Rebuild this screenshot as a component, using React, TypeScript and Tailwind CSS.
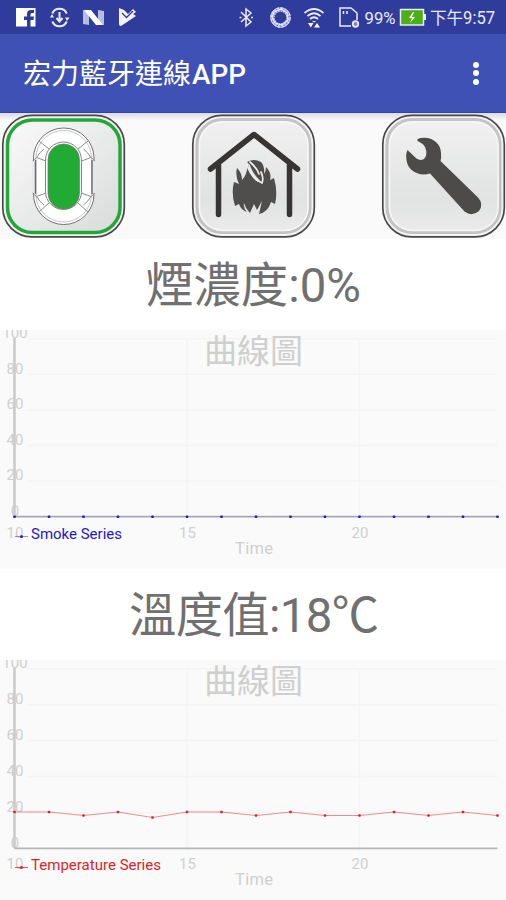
import React from "react";

const FONT = "font-[Roboto,'Noto_Sans_CJK_TC',sans-serif]";

function StatusBar() {
  return (
    <div className="h-[34px] bg-[#303c9c]">
      <svg width="506" height="34" className="block" fill="none" stroke="#e9ebf8">
        {/* social */}
        <path d="M16 8h19.500v18.500h-5v-6.500h3l.5-3.500h-3.500v-2q0-1.500 1.500-1.500h2v-3h-3q-4 0-4 4v2.500h-3v3.500h3v6.500H16z" fill="#fff" stroke="none" />
        {/* sync */}
        <path d="M52.300 13.500a7.800 7.800 0 0 1 14.400 0M52.300 21.500a7.800 7.800 0 0 0 14.400 0" strokeWidth="2" />
        <path d="M50 17.500h4l-2-3.500zM65 17.500h4.500l-2.500 3.500z" fill="#e9ebf8" stroke="none" />
        <path d="M59.500 12v9M56.500 18l3 3.500 3-3.500" strokeWidth="2" />
        {/* letter-shaped ribbon */}
        <path d="M83 10l6 1v14l-6-1zM98 10l6 1v14l-6-1z" fill="#b6bce2" stroke="none" />
        <path d="M84 10h7l12 15h-7z" fill="#fff" stroke="none" />
        {/* checked play */}
        <path d="M119 8l5 2 4 4 5-5 3 3-3 2 3 2-15 10q-2 0-2-2z" fill="#f2f3fc" stroke="none" />
        <path d="M122 13l4.500 4.500 6.500-6.500" stroke="#303c9c" strokeWidth="1.300" />
        {/* bluetooth */}
        <path d="M241 12l10 10-5 4V9l5 4-10 9" strokeWidth="1.500" />
        <path d="M239.500 17.500h2M251 17.500h2" strokeWidth="1.500" />
        {/* aperture ring */}
        <circle cx="280.500" cy="17.500" r="8" strokeWidth="4.500" strokeDasharray="2.600 .5" stroke="#b4bae6" />
        <path d="M274 12l7-3 6 4 1 7-6 5-7-2-3-6z" strokeWidth="1.200" />
        <circle cx="280.500" cy="17.500" r="9.700" strokeWidth="1" strokeDasharray="4 1" />
        {/* wifi */}
        <path d="M304.500 13q9.500-8 19 0M307.500 16q6.500-5.500 13 0M310 19q4-3.500 8 0" strokeWidth="1.700" />
        <path d="M312 21h4l-2 1.500z" fill="#fff" stroke="none" />
        <path d="M308 23h5.500l-2.700 4.500zM314 27.500h6l-3-4.500z" fill="#fff" stroke="none" />
        {/* memory card */}
        <path d="M351 26h-11V8h11l6 5v7M343.500 11v3M347 11v3" strokeWidth="1.500" />
        <circle cx="355.500" cy="24" r="2.800" strokeWidth="1.700" fill="#7e87c7" />
        <g fill="#e9ebf8" stroke="none" className={FONT}>
          <text x="364.500" y="24" fontSize="17" textLength="31" lengthAdjust="spacingAndGlyphs">99%</text>
          <text x="430" y="24" fontSize="17.500" textLength="65" lengthAdjust="spacingAndGlyphs">下午9:57</text>
        </g>
        {/* battery */}
        <rect x="400.500" y="9.500" width="23" height="15.500" fill="#4cb012" strokeWidth="1.500" />
        <path d="M425 14v6" strokeWidth="2" />
        <path d="M413 12l-4 6h3l-2 5 5-6h-3l2-5z" fill="#fff" stroke="none" />
      </svg>
    </div>
  );
}

function AppBar() {
  return (
    <header className="flex h-[79px] items-center justify-between border-b border-[#3443a8] bg-[#3f51b5] pl-[23px] pr-[27px]">
      <svg width="240" height="79" className={FONT}>
        <text x="0" y="50" fontSize="28" fill="#fff" textLength="168" lengthAdjust="spacingAndGlyphs">宏力藍牙連線</text>
        <text x="169" y="50" fontSize="28" fontWeight="500" fill="#fff" textLength="54" lengthAdjust="spacingAndGlyphs">APP</text>
      </svg>
      <div className="flex flex-col gap-[2.500px]">
        <i className="size-[6px] rounded-full bg-white" />
        <i className="size-[6px] rounded-full bg-white" />
        <i className="size-[6px] rounded-full bg-white" />
      </div>
    </header>
  );
}

function Tile({ active, children }: { active?: boolean; children: React.ReactNode }) {
  return (
    <svg width="126" height="126" viewBox="0 0 126 126" fill="none">
      <defs>
        <linearGradient id="face" x1="0" y1="0" x2="1" y2="1">
          <stop offset="0" stopColor="#fafafa" />
          <stop offset="1" stopColor="#d9dada" />
        </linearGradient>
        <linearGradient id="face2" x1="0" y1="0" x2="0" y2="1">
          <stop offset="0" stopColor="#f1f1f1" />
          <stop offset=".7" stopColor="#e1e2e2" />
          <stop offset="1" stopColor="#ebebeb" />
        </linearGradient>
      </defs>
      <rect x="2.800" y="2.300" width="121.500" height="121.500" rx="29" fill="#f4f4f4" stroke="#4b4747" strokeWidth="1.700" />
      {active ? (
        <rect x="7.500" y="7" width="112.500" height="112.500" rx="25" fill="url(#face)" stroke="#22a738" strokeWidth="3.500" />
      ) : (
        <>
          <rect x="7" y="6.500" width="113" height="113" rx="25" fill="url(#face2)" stroke="#c4c4c4" strokeWidth="3.200" />
          <rect x="9.500" y="9" width="108.500" height="108.500" rx="23" stroke="#f7f7f7" strokeWidth="1.500" />
        </>
      )}
      {children}
    </svg>
  );
}

function DetectorIcon() {
  return (
    <g>
      <rect x="33.500" y="15" width="60.500" height="96.500" rx="30.200" fill="#fff" stroke="#707070" />
      <rect x="36" y="17.500" width="55.500" height="91.500" rx="27.700" stroke="#b5b5b5" strokeWidth=".8" />
      <path d="M32.500 48h3.500v32h-3.500zM95 48h-3.500v32h3.500z" fill="#e8e8e8" />
      <path d="M35.500 47v34M92 47v34" stroke="#6f6f6f" strokeWidth="1.500" />
      <rect x="45.500" y="29" width="36" height="67.500" rx="18" stroke="#858585" />
      <path d="M39 28l10 8M88 28l-10 8M32.500 48l4-3.500 9.500 3.500M95 48l-4-3.500-9.500 3.500M32.500 80l4 3.500 9.500-3.500M95 80l-4 3.500-9.500-3.500M39 99l10-9M88 99l-10-9M44 36q-5 4-7 8M83.500 36q5 4 7 8M44 92q-5-4-7-8M83.500 92q5-4 7-8" stroke="#8a8a8a" />
      <rect x="48" y="31" width="31.500" height="65" rx="15.700" fill="#21ab35" stroke="#777" strokeWidth=".7" />
    </g>
  );
}

function HouseFireIcon() {
  return (
    <g>
      <path d="M20.500 56L64 21.500 107.500 56M28.500 52v49.500M99.500 52v49.500" stroke="#373433" strokeWidth="5.500" strokeLinecap="round" strokeLinejoin="round" />
      <path d="M47 55Q52 60 52 67Q57 62 58 51Q60 65 68 69Q71 67 70 63Q76 62 76 54Q82 60 80 67L84 65Q88 79 85 91L81 89Q78 99 69 101L72 88L67 97L64 91L60 100L56 95L54 90Q53 95 57 99Q51 97 49 91L45 93Q41 80 44 69L49 71Q45 63 47 55Z" fill="#504e4d" />
      <path d="M57 49Q64 45 71 49Q75 53 74 62L72 69Q65 64 61 55Q60 51 57 49Z" fill="#504e4d" />
      <path d="M57 51Q60 64 72 70Q74 65 71 59" stroke="#ededed" strokeWidth="1.700" strokeLinecap="round" />
      <path d="M60 49Q67 55 69 61" stroke="#ededed" strokeWidth="1.700" strokeLinecap="round" />
    </g>
  );
}

function WrenchIcon() {
  return (
    <path d="M37.500 26C49 22 61 29 61 40Q61.500 45 60.500 48L98 84.500Q104 91 99 98Q92 104 84.500 98.500L50 60.500C38 64 27.500 57 26.500 47Q25.500 41 27.500 37L36.500 45.500Q40 48 44 46Q47.500 42 46 37Q45 31 37.500 28Z" fill="#4c4b4a" />
  );
}

const X = (t: number) => 14.5 + (t - 10) * 34.5;

function Chart({ bottom, step, values, color, label, labelWidth, dy }: {
  bottom: number; step: number; values: number[]; color: string; label: string; labelWidth: number; dy: number;
}) {
  const points = values.map((v, i) => [X(10 + i), v]);
  return (
    <svg width="506" height="240" className={`block shrink-0 bg-[#fafafa] ${FONT}`}>
      {[1, 2, 3, 4, 5].map((n) => (
        <path key={n} d={`M28 ${bottom - n * step}H497.500`} stroke="#f4f4f4" strokeWidth="1.500" />
      ))}
      <path d={`M187 8V${bottom + 4}M359.500 8V${bottom + 4}`} stroke="#f5f5f5" strokeWidth="1.500" />
      <g fill="#cfcfcf" fontSize="15" textAnchor="middle">
        {[0, 20, 40, 60, 80, 100].map((v, i) => (
          <text key={v} x="15" y={bottom - 0.7 - i * step}>{v}</text>
        ))}
        {[10, 15, 20].map((v) => (
          <text key={v} x={X(v) + 0.5} y={207.5 + dy}>{v}</text>
        ))}
        <text x="254" y={224 + dy} fontSize="16.500" textLength="38">Time</text>
        <text x="253.500" y="33" fontSize="33">曲線圖</text>
      </g>
      <path d={`M14.500 8V${bottom}`} stroke="#cacaca" strokeWidth="2.500" />
      <path d={`M14.500 ${bottom}H497.500`} stroke="#b5b5b5" strokeWidth="1.800" />
      <polyline points={points.map((p) => p.join(",")).join(" ")} fill="none" stroke={color} strokeWidth="1" opacity={dy ? 0.5 : 0.15} />
      {points.map(([x, y], i) => (
        <rect key={i} x={x - 1.25} y={y - 1.25} width="2.500" height="2.500" rx=".7" fill={color} />
      ))}
      <path d={`M15 ${206.5 + dy}H28`} stroke={color} strokeWidth="1" opacity={dy ? 0.75 : 0.45} />
      <circle cx="21.500" cy={206.5 + dy} r="1.500" fill={color} />
      <text x="31" y={209 + dy} fontSize="15" fill={color} textLength={labelWidth} lengthAdjust="spacingAndGlyphs">{label}</text>
    </svg>
  );
}

function Reading({ children, width, x = 253 }: { children: string; width: number; x?: number }) {
  return (
    <svg width="506" height="91" className={`block shrink-0 bg-white ${FONT}`}>
      <text x={x} y="63" textAnchor="middle" fontSize="47.300" fill="#707070" textLength={width}>{children}</text>
    </svg>
  );
}

export default function App() {
  return (
    <main className="flex h-[900px] w-[506px] flex-col overflow-hidden bg-[#fafafa]">
      <StatusBar />
      <AppBar />
      <section className="flex h-[126px] shrink-0 justify-between bg-linear-to-b from-[#dcdae2] from-0% to-[#fafafa] to-6%">
        <Tile active><DetectorIcon /></Tile>
        <Tile><HouseFireIcon /></Tile>
        <Tile><WrenchIcon /></Tile>
      </section>
      <Reading width={215} x={253.5}>煙濃度:0%</Reading>
      <div className="h-[239px] shrink-0 overflow-hidden">
        <Chart bottom={186.7} step={35.6} dy={0} color="#2418c8" label="Smoke Series" labelWidth={91}
          values={Array(15).fill(186.7)} />
      </div>
      <Reading width={250} x={254}>溫度值:18℃</Reading>
      <Chart bottom={188.3} step={35.9} dy={1} color="#dc1f28" label="Temperature Series" labelWidth={130}
        values={[152, 152, 155.5, 152, 157.500, 152, 152, 155.5, 152, 155.5, 155.5, 152, 155.5, 152, 155.5]} />
    </main>
  );
}
